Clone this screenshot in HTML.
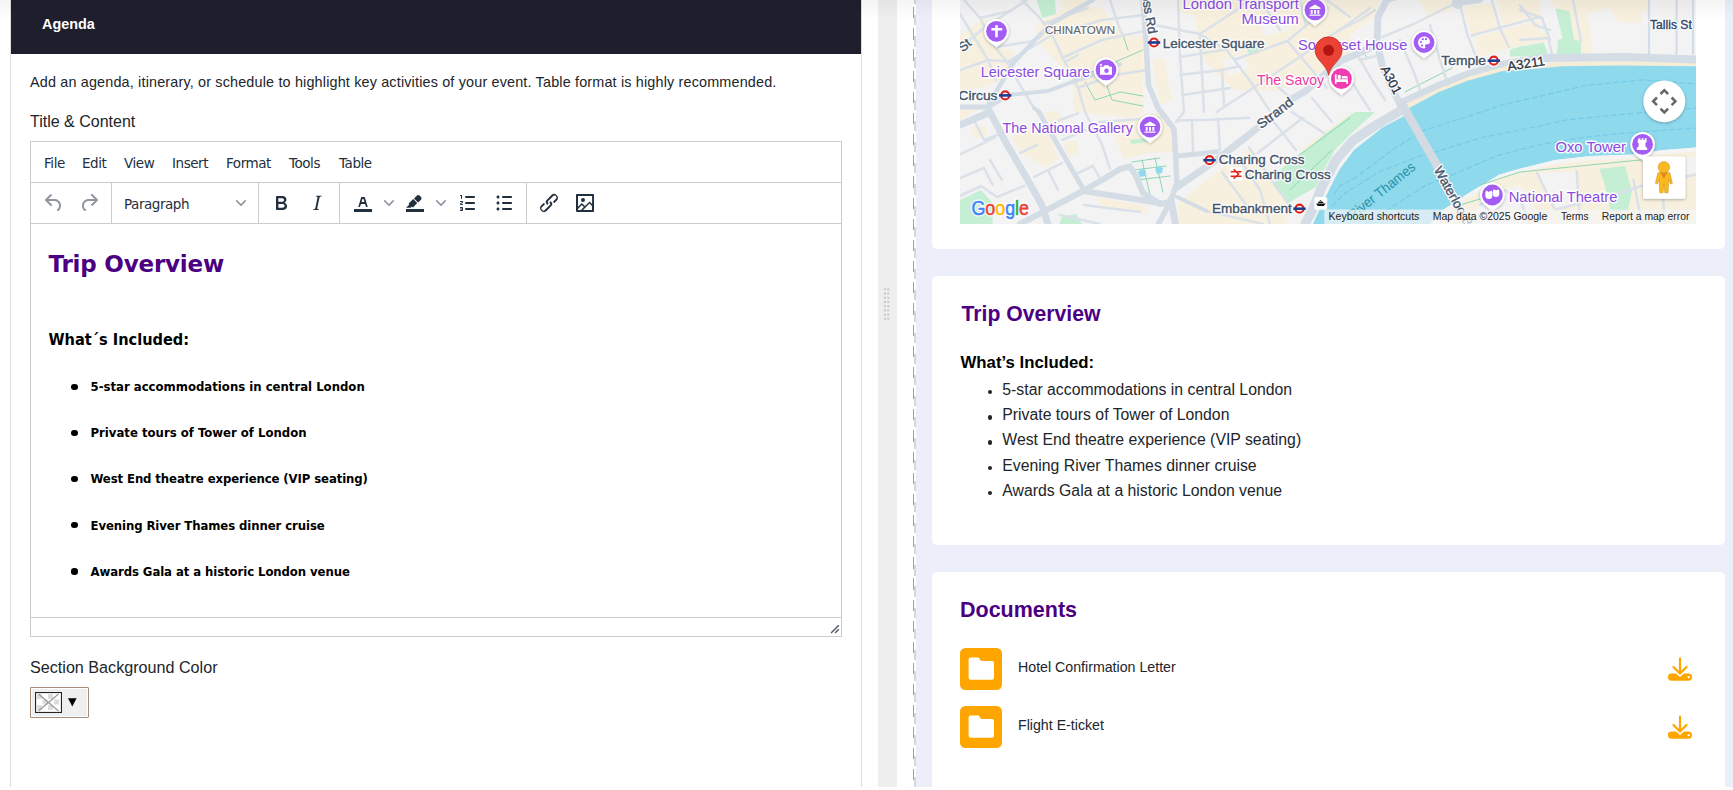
<!DOCTYPE html>
<html lang="en">
<head>
<meta charset="utf-8">
<title>Agenda</title>
<style>
*{box-sizing:border-box;margin:0;padding:0}
html,body{width:1733px;height:790px;overflow:hidden;background:#fff}
body{font-family:"Liberation Sans",Arial,sans-serif;color:#212529;position:relative}
.abs{position:absolute}
.t{position:absolute;white-space:nowrap;line-height:1}
/* left panel */
#lp{left:10px;top:-1px;width:852px;height:800px;border:1px solid #dcdcdc;background:#fff}
#hdr{left:11px;top:0;width:850px;height:54px;background:#1f1e2d}
#hdr .t{left:31px;top:17px;font-size:14.4px;font-weight:700;color:#fff}
#ed{left:30px;top:141px;width:812px;height:496px;border:1px solid #ccc;background:#fff}
.hl{position:absolute;left:0;right:0;height:1px;background:#ccc}
.vl{position:absolute;width:1px;background:#ccc;top:41px;height:40px}
.menu{font-family:"DejaVu Sans","Liberation Sans",sans-serif;font-size:13.5px;color:#222f3e;letter-spacing:-.45px;top:15px}
.seg{font-family:"DejaVu Sans","Liberation Sans",sans-serif;font-stretch:condensed;font-weight:700;color:#000}
/* splitter */
#sp{left:878px;top:0;width:19px;height:790px;background:#eee}
#dash1{left:913px;top:-13.7px;width:1px;height:810px;background:repeating-linear-gradient(to bottom,#a0a0a0 0 11.2px,transparent 11.2px 21.16px)}
#dash2{left:914px;top:-6.2px;width:2px;height:810px;background:repeating-linear-gradient(to bottom,#d6d6d6 0 10.2px,transparent 10.2px 21.16px)}
#rp{left:916px;top:0;width:817px;height:790px;background:#eceff9}
.card{position:absolute;left:932px;width:793px;background:#fff;border-radius:5px}
.h2{font-size:21.2px;font-weight:700;color:#4b0082}
.li{font-size:15.8px;color:#212529}
#topshade{left:0;top:0;width:1733px;height:20px;background:linear-gradient(to bottom,rgba(0,0,0,.045),rgba(0,0,0,0));pointer-events:none}
.ic{position:absolute;fill:#222f3e}
.ic.dis{opacity:.5}
.bul{position:absolute;border-radius:50%;background:#000}
</style>
</head>
<body>
<div id="lp" class="abs"></div>
<div id="hdr" class="abs"><div class="t">Agenda</div></div>
<div class="t" style="left:30px;top:75px;font-size:14.4px;letter-spacing:.165px;color:#212529">Add an agenda, itinerary, or schedule to highlight key activities of your event. Table format is highly recommended.</div>
<div class="t" style="left:30px;top:114px;font-size:16px;color:#212529">Title &amp; Content</div>

<div id="ed" class="abs">
  <div class="hl" style="top:40px"></div>
  <div class="hl" style="top:81px"></div>
  <div class="hl" style="top:475px"></div>
  <div class="vl" style="left:80px"></div>
  <div class="vl" style="left:227px"></div>
  <div class="vl" style="left:308px"></div>
  <div class="vl" style="left:495px"></div>
  <div class="t menu" style="left:13px">File</div>
  <div class="t menu" style="left:51px">Edit</div>
  <div class="t menu" style="left:93px">View</div>
  <div class="t menu" style="left:141px">Insert</div>
  <div class="t menu" style="left:195px">Format</div>
  <div class="t menu" style="left:258px">Tools</div>
  <div class="t menu" style="left:308px">Table</div>
  <div class="t menu" style="left:93px;top:56px">Paragraph</div>
  
  <svg class="ic dis" style="left:10.5px;top:49px" width="24" height="24" viewBox="0 0 24 24"><path d="M6.4 8H12c3.7 0 6.2 2 6.8 5.100.6 2.700-.4 5.600-2.300 6.800a1 1 0 0 1-1-1.800c1.100-.6 1.800-2.700 1.400-4.600-.5-2.100-2.100-3.500-4.900-3.500H6.400l3.300 3.300a1 1 0 1 1-1.400 1.400l-5-5a1 1 0 0 1 0-1.400l5-5a1 1 0 0 1 1.400 1.400L6.400 8z"/></svg>
  <svg class="ic dis" style="left:46px;top:49px" width="24" height="24" viewBox="0 0 24 24"><path d="M17.600 10H12c-2.800 0-4.400 1.400-4.900 3.500-.4 2 .3 4 1.400 4.600a1 1 0 1 1-1 1.800c-2-1.200-2.900-4.100-2.300-6.800.6-3 3-5.100 6.800-5.100h5.600l-3.300-3.300a1 1 0 1 1 1.400-1.400l5 5a1 1 0 0 1 0 1.400l-5 5a1 1 0 0 1-1.400-1.400l3.300-3.300z"/></svg>
  <svg class="ic" style="left:204.5px;top:56px;opacity:.5" width="10" height="10" viewBox="0 0 10 10"><path d="M8.700 2.200c.3-.3.800-.3 1 0 .4.400.4.900 0 1.200L5.700 7.800c-.3.300-.9.300-1.200 0L.2 3.400a.8.800 0 0 1 0-1.200c.3-.3.800-.3 1.100 0L5 6l3.700-3.800z"/></svg>
  <svg class="ic" style="left:238px;top:49px" width="24" height="24" viewBox="0 0 24 24"><path fill-rule="evenodd" d="M7.800 19c-.3 0-.5 0-.6-.2l-.2-.5V5.700c0-.2 0-.4.200-.5l.6-.2h5c1.500 0 2.700.3 3.500 1 .7.600 1.100 1.400 1.100 2.500a3 3 0 0 1-.6 1.900c-.4.600-1 1-1.600 1.200.4.100.9.300 1.300.6s.8.700 1 1.200c.4.400.5 1 .5 1.600 0 1.300-.4 2.300-1.300 3-.8.700-2.100 1-3.800 1H7.800zm5-8.300c.6 0 1.200-.1 1.600-.5.400-.3.600-.7.600-1.300 0-1.100-.8-1.700-2.300-1.700H9.300v3.500h3.400zm.5 6c.7 0 1.300-.1 1.700-.4.400-.4.600-.9.600-1.500s-.2-1-.7-1.400c-.4-.3-1-.4-2-.4H9.400v3.800h4z"/></svg>
  <svg class="ic" style="left:274px;top:49px" width="24" height="24" viewBox="0 0 24 24"><path fill-rule="evenodd" d="M16.700 4.700l-.1.900h-.3c-.6 0-1 0-1.400.3-.3.300-.4.600-.5 1.100l-2.100 9.800v.6c0 .5.400.8 1.400.8h.2l-.2.800H8l.2-.8h.2c1.100 0 1.800-.5 2-1.500l2-9.800.1-.5c0-.6-.4-.8-1.400-.8h-.3l.2-.9h5.800z"/></svg>
  <svg class="ic" style="left:320px;top:49px" width="24" height="24" viewBox="0 0 24 24"><path d="M3 18h18v3H3z"/><path fill-rule="evenodd" d="M8.700 16h-.8a.5.5 0 0 1-.5-.6l2.700-9c.1-.3.300-.4.500-.4h2.800c.2 0 .4.100.5.400l2.700 9a.5.5 0 0 1-.5.600h-.8a.5.5 0 0 1-.4-.4l-.7-2.200c0-.3-.3-.4-.5-.4h-3.400c-.2 0-.4.100-.5.400l-.7 2.200c0 .3-.2.400-.4.400zm2.600-7.600l-.6 2a.5.5 0 0 0 .5.600h1.600a.5.5 0 0 0 .5-.6l-.6-2c0-.3-.3-.4-.5-.4h-.4c-.2 0-.4.100-.5.400z"/></svg>
  <svg class="ic" style="left:353px;top:56px;opacity:.5" width="10" height="10" viewBox="0 0 10 10"><path d="M8.700 2.200c.3-.3.800-.3 1 0 .4.400.4.900 0 1.200L5.700 7.800c-.3.300-.9.300-1.200 0L.2 3.400a.8.800 0 0 1 0-1.200c.3-.3.800-.3 1.100 0L5 6l3.700-3.800z"/></svg>
  <svg class="ic" style="left:372px;top:49px" width="24" height="24" viewBox="0 0 24 24"><path d="M3 18h18v3H3z"/><path d="M7.700 16.700H3l3.300-3.300-.7-.8L10.200 8l4 4.100-4 4.200c-.2.200-.6.200-.8 0l-.6-.7-1.100 1.100zm5-7.500L11 7.400l3-2.900a2 2 0 0 1 2.600 0L18 6c.7.700.7 2 0 2.700l-2.900 2.900-1.800-1.800-.5-.6"/></svg>
  <svg class="ic" style="left:405px;top:56px;opacity:.5" width="10" height="10" viewBox="0 0 10 10"><path d="M8.700 2.200c.3-.3.800-.3 1 0 .4.400.4.900 0 1.200L5.700 7.800c-.3.300-.9.300-1.200 0L.2 3.400a.8.800 0 0 1 0-1.200c.3-.3.800-.3 1.100 0L5 6l3.700-3.800z"/></svg>
  <svg class="ic" style="left:425px;top:49px" width="24" height="24" viewBox="0 0 24 24"><path fill-rule="evenodd" d="M10 17h8c.6 0 1 .4 1 1s-.4 1-1 1h-8a1 1 0 0 1 0-2zm0-6h8c.6 0 1 .4 1 1s-.4 1-1 1h-8a1 1 0 0 1 0-2zm0-6h8c.6 0 1 .4 1 1s-.4 1-1 1h-8a1 1 0 1 1 0-2zM6 4v3.500c0 .3-.2.500-.5.500a.5.5 0 0 1-.5-.5V5h-.5a.5.5 0 0 1 0-1H6zm-1 8.800l.2.200h1.300c.3 0 .5.200.5.500s-.2.500-.5.500H4.900a1 1 0 0 1-.9-1V13c0-.4.300-.8.600-1l1.200-.4.200-.3a.2.200 0 0 0-.2-.2H4.500a.5.500 0 0 1-.5-.5c0-.3.200-.5.500-.5h1.600c.5 0 .9.400.9 1v.1c0 .4-.3.800-.6 1l-1.200.4-.2.300zM7 17v2c0 .6-.4 1-1 1H4.500a.5.500 0 0 1 0-1h1.200c.2 0 .3-.1.300-.3 0-.2-.1-.3-.3-.3H4.400a.4.400 0 1 1 0-.8h1.300c.2 0 .3-.1.300-.3 0-.2-.1-.3-.3-.3H4.500a.5.500 0 1 1 0-1H6c.6 0 1 .4 1 1z"/></svg>
  <svg class="ic" style="left:461px;top:49px" width="24" height="24" viewBox="0 0 24 24"><path fill-rule="evenodd" d="M11 5h8c.6 0 1 .4 1 1s-.4 1-1 1h-8a1 1 0 0 1 0-2zm0 6h8c.6 0 1 .4 1 1s-.4 1-1 1h-8a1 1 0 0 1 0-2zm0 6h8c.6 0 1 .4 1 1s-.4 1-1 1h-8a1 1 0 0 1 0-2zM4.500 6c0-.8.700-1.500 1.500-1.500s1.500.7 1.500 1.500S6.800 7.500 6 7.500 4.500 6.800 4.500 6zm0 6c0-.8.700-1.500 1.500-1.500s1.500.7 1.500 1.500-.7 1.500-1.500 1.500-1.500-.7-1.500-1.500zm0 6c0-.8.700-1.500 1.500-1.500s1.500.7 1.500 1.500-.7 1.500-1.500 1.500-1.500-.7-1.500-1.500z"/></svg>
  <svg class="ic" style="left:506px;top:49px" width="24" height="24" viewBox="0 0 24 24"><path d="M6.200 12.300a1 1 0 0 1 1.400 1.400l-2.100 2a2 2 0 1 0 2.700 2.800l4.800-4.800a1 1 0 0 0 0-1.400 1 1 0 1 1 1.400-1.300 2.900 2.900 0 0 1 0 4L9.600 20a3.900 3.900 0 0 1-5.500-5.500l2-2zm11.600-.6a1 1 0 0 1-1.400-1.400l2-2a2 2 0 1 0-2.600-2.800L11 10.300a1 1 0 0 0 0 1.400A1 1 0 1 1 9.600 13a2.900 2.900 0 0 1 0-4L14.400 4a3.900 3.900 0 0 1 5.500 5.500l-2 2z"/></svg>
  <svg class="ic" style="left:542px;top:49px" width="24" height="24" viewBox="0 0 24 24"><path d="M5 15.700l3.300-3.200c.3-.3.700-.3 1 0L12 15l4.100-4c.3-.4.800-.4 1 0l2 1.900V5H5v10.700zM5 18V19h3l2.800-2.900-2-2L5 17.900zm14-3l-2.500-2.400-6.400 6.500H19v-4zM4 3h16c.6 0 1 .4 1 1v16c0 .6-.4 1-1 1H4a1 1 0 0 1-1-1V4c0-.6.4-1 1-1zm6 8a2 2 0 1 0 0-4 2 2 0 0 0 0 4z"/></svg>
  <svg class="ic" style="left:799px;top:482px;opacity:.8" width="10" height="10" viewBox="0 0 10 10"><path d="M8.100 1.100A.5.5 0 1 1 9 2l-7 7A.5.5 0 1 1 1 8l7-7zM8.100 5.100A.5.5 0 1 1 9 6l-3 3A.5.5 0 1 1 5 8l3-3z"/></svg>

<div class="bul" style="left:40.4px;top:241.8px;width:6.4px;height:6.4px"></div>
<div class="bul" style="left:40.4px;top:287.5px;width:6.4px;height:6.4px"></div>
<div class="bul" style="left:40.4px;top:333.5px;width:6.4px;height:6.4px"></div>
<div class="bul" style="left:40.4px;top:379.5px;width:6.4px;height:6.4px"></div>
<div class="bul" style="left:40.4px;top:426.3px;width:6.4px;height:6.4px"></div>
  <div class="t seg" style="left:17.5px;top:111px;font-size:23px;letter-spacing:-.2px;color:#4b0082;font-stretch:normal">Trip Overview</div>
  <div class="t seg" style="left:17.5px;top:189.5px;font-size:16.2px">What´s Included:</div>
  <div class="t seg" style="left:59.5px;top:238px;font-size:13px">5-star accommodations in central London</div>
  <div class="t seg" style="left:59.5px;top:284px;font-size:13px">Private tours of Tower of London</div>
  <div class="t seg" style="left:59.5px;top:330px;font-size:13px;letter-spacing:-.1px">West End theatre experience (VIP seating)</div>
  <div class="t seg" style="left:59.5px;top:376.6px;font-size:13px;letter-spacing:-.09px">Evening River Thames dinner cruise</div>
  <div class="t seg" style="left:59.5px;top:423px;font-size:13px;letter-spacing:-.08px">Awards Gala at a historic London venue</div>
</div>

<div class="t" style="left:30px;top:659.4px;font-size:16.15px;color:#212529">Section Background Color</div>
<div class="abs" id="cbtn" style="left:30px;top:687px;width:59px;height:31px;border:1px solid #a58b78;background:#efefef;border-radius:1px;box-shadow:inset 0 0 0 1px #fff"></div>
<svg class="abs" style="left:35px;top:692px" width="27" height="21" viewBox="0 0 27 21"><rect x=".5" y=".5" width="26" height="20" fill="#fff" stroke="#222" stroke-width="1.200"/><g fill="#dcdcdc"><rect x="2" y="2" width="5" height="5"/><rect x="13" y="2" width="5" height="5"/><rect x="7.500" y="7.500" width="5" height="5"/><rect x="19" y="7.500" width="5" height="5"/><rect x="2" y="13" width="5" height="5"/><rect x="13" y="13" width="5" height="5"/></g><path d="M3.500 2 L23.500 19 M23.500 2 L3.500 19" stroke="#9a9a9a" stroke-width="1.300"/></svg>
<svg class="abs" style="left:67.500px;top:697.500px" width="9" height="9" viewBox="0 0 9 9"><path d="M0 .3 h8.600 l-4.300 8.200z" fill="#000"/></svg>

<div id="sp" class="abs"></div>
<svg class="abs" style="left:884px;top:288px" width="6" height="33" viewBox="0 0 6 33"><rect x="0" y="0.3" width="2" height="2" fill="#c9c9c9"/><rect x="3.300" y="0.3" width="2" height="2" fill="#c9c9c9"/><rect x="0" y="4.52" width="2" height="2" fill="#c9c9c9"/><rect x="3.300" y="4.52" width="2" height="2" fill="#c9c9c9"/><rect x="0" y="8.74" width="2" height="2" fill="#c9c9c9"/><rect x="3.300" y="8.74" width="2" height="2" fill="#c9c9c9"/><rect x="0" y="12.96" width="2" height="2" fill="#c9c9c9"/><rect x="3.300" y="12.96" width="2" height="2" fill="#c9c9c9"/><rect x="0" y="17.18" width="2" height="2" fill="#c9c9c9"/><rect x="3.300" y="17.18" width="2" height="2" fill="#c9c9c9"/><rect x="0" y="21.4" width="2" height="2" fill="#c9c9c9"/><rect x="3.300" y="21.4" width="2" height="2" fill="#c9c9c9"/><rect x="0" y="25.62" width="2" height="2" fill="#c9c9c9"/><rect x="3.300" y="25.62" width="2" height="2" fill="#c9c9c9"/><rect x="0" y="29.84" width="2" height="2" fill="#c9c9c9"/><rect x="3.300" y="29.84" width="2" height="2" fill="#c9c9c9"/></svg>
<div id="dash1" class="abs"></div>
<div id="dash2" class="abs"></div>
<div id="rp" class="abs"></div>

<div class="card" style="top:-10px;height:259px"></div>
<div class="card" style="top:276px;height:269px"></div>
<div class="card" style="top:572px;height:240px"></div>
<!--MAPSTART--><svg id="map" class="abs" style="left:960px;top:0" width="736" height="224" viewBox="0 0 736 224" font-family="'Liberation Sans',Arial,sans-serif">
<defs>
<clipPath id="mc"><rect x="0" y="0" width="736" height="224"/></clipPath>
<filter id="sh" x="-30%" y="-30%" width="160%" height="160%"><feDropShadow dx="0" dy="1" stdDeviation="1.5" flood-color="#000" flood-opacity=".3"/></filter>

</defs>
<g clip-path="url(#mc)">
<rect width="736" height="224" fill="#f3f3f4"/>
<path d="M76 24 L113 4 L142 8 L163 35 L183 37 L183 112 L170 118 L113 112 L113 80 L79 42 Z" fill="#f8f0de"/>
<path d="M0 35 L25 17 L33 47 L54 50 L42 80 L21 88 L0 91 Z" fill="#f8f0de"/>
<path d="M100 0 L135 0 L118 10 L104 14 Z" fill="#f8f0de"/>
<path d="M50 137.5 L85 126 L99 159 L85 167 L61 153 Z" fill="#f8f0de"/>
<path d="M103 143 L116 140 L119 152 L108 156 Z" fill="#f8f0de"/>
<path d="M11 127.6 L25.5 126 L27 136 L14 139 Z" fill="#f8f0de"/>
<path d="M0 108 L10 104 L14 112 L0 120 Z" fill="#f8f0de"/>
<path d="M156 120.5 L201 112 L212.7 130.4 L212.7 151.7 L190 153 L164 159 L156 140 Z" fill="#f8f0de"/>
<path d="M136 197 L187 205.5 L186 214 L142 208 Z" fill="#f8f0de"/>
<path d="M85 113 L97 110 L103 122 L91 126 Z" fill="#f8f0de"/>
<path d="M218 0 L420 0 L414 16 L390 35.4 L390 59.5 L357 73.7 L317.6 90.7 L275 90.7 L251 68 L238 54 L236 16 L218 12 Z" fill="#f8f0de"/>
<path d="M192 60 L204 58 L212 100 L200 105 Z" fill="#f8f0de"/>
<path d="M258 171.5 L292 147.4 L313 180 L331.7 202.7 L326 224 L218 224 L218 202.7 Z" fill="#f8f0de"/>
<path d="M340 150 L392 112 L398 118 L346 156 Z" fill="#f8f0de"/>
<path d="M459 0 L490.6 0 L492 11.3 L468 15.6 Z" fill="#f8f0de"/>
<path d="M502 5.7 L533 4 L540 28 L511.8 35.4 Z" fill="#f8f0de"/>
<path d="M536 0 L580 0 L580 15.6 L543 25.5 Z" fill="#f8f0de"/>
<path d="M514.7 36.9 L580 19.8 L580 42.5 L548.7 48.2 L519 56.7 Z" fill="#f8f0de"/>
<path d="M380 0 L415.4 0 L412.6 18.4 L394 31 L380 21 Z" fill="#f8f0de"/>
<path d="M580 0 L687.6 0 L687.6 11 L682 11 L682 22.7 L659 22.7 L649 7 L628 14 L631 35 L632 54 L621 54 L621 41 L614 39.7 L609.6 11.3 L595.4 8.5 L590 0 Z" fill="#f8f0de"/>
<path d="M560 34 L588.4 32 L585.5 41 L560 45.4 Z" fill="#f8f0de"/>
<path d="M736 150 L701.7 153 L673.4 157.5 L631 159 L595.4 163 L560 172 L540 178 L510 196 L485 214 L478 224 L736 224 Z" fill="#f8f0de"/>
<path d="M577 173 L616.7 171.5 L616.7 202.7 L595 209.8 Z" fill="#f3f3f4"/>
<path d="M690 160 L736 156 L736 172 L690 180 Z" fill="#f3f3f4"/>
<path d="M520 200 L560 185 L575 210 L560 224 L510 224 Z" fill="#f3f3f4"/>
<path d="M170 160 L200 158 L212 190 L185 196 L176 176 Z" fill="#f3f3f4"/>
<path d="M298 20 L325 16 L330 30 L305 36 Z" fill="#f3f3f4"/>
<path d="M262 60 L282 54 L290 68 L270 76 Z" fill="#f3f3f4"/>
<path d="M448.5 105.7 L478 90 L506.6 78.8 L542 68.9 L560 68 L602.5 64.3 L659 63.5 L736 64.3" fill="none" stroke="#f6edd8" stroke-width="5" stroke-linecap="round" stroke-linejoin="round" />
<path d="M395 112 L364 134.7 L349 148 L337.4 155.3 L321.5 168.6 L313 185.4 L328.6 203 L342 195 L356 187 L366.5 165 L375 150 L390 134.7 L415 112 Z" fill="#c4efd5"/>
<path d="M0 200 L21 190 L32.6 202.7 L32.6 224 L0 224 Z" fill="#c4efd5"/>
<path d="M99 224 L102 217 L116 214 L122 224 Z" fill="#c4efd5"/>
<path d="M77 0 L95 0 L96 14 L82 18 Z" fill="#c4efd5"/>
<path d="M639.4 168.7 L665 165.9 L672 191.4 L667.7 211 L650.7 211 L645 185.7 Z" fill="#c4efd5"/>
<path d="M595.4 8.5 L609.6 11.3 L614 39.7 L621 41 L621 54 L597 54 L598 39.7 L602.5 38.3 Z" fill="#c4efd5"/>
<path d="M560 46.8 L584 42.5 L588 54 L560 56.7 Z" fill="#c4efd5"/>
<path d="M550 49.6 L562 46 L562 56 L550 56.7 Z" fill="#c4efd5"/>
<path d="M287 48 L297 46 L299 53 L289 55 Z" fill="#c4efd5"/>
<path d="M170 140 L186 138 L187 142 L171 144 Z" fill="#c4efd5"/>
<path d="M353 224 L364 200 L374 180 L380 168.7 L394 150 L422.5 127.6 L446.6 114.8 L449.5 107.7 L479 92 L507.6 80.8 L543 70.9 L560 70 L602.5 66.3 L659 65.5 L736 66.3 L736 147.4 L701.7 150.3 L673.4 154.5 L631 156 L595.4 160 L560 168.7 L540 174.4 L507.6 194 L482 211 L470 224 Z" fill="#8fd9ed"/>
<path d="M736 149.4 L701.7 152.3 L673.4 156.5 L631 158 L595.4 162 L560 170.7 L540 176.4 L507.6 196 L482 213 L472 226" fill="none" stroke="#f4f4f4" stroke-width="4" stroke-linecap="round" stroke-linejoin="round" />
<path d="M374 194 L380 185.7 L394 178.6 L433.9 148.9 L463.6 130.4 L521.7 112 L540 105.4 L600 91.5 L625.5 85.5 L682.5 79.8 L736 84" fill="none" stroke="#74cbe7" stroke-width="1.2" stroke-linecap="round" stroke-linejoin="round" stroke-dasharray="5 3.300"/>
<path d="M372 206 L385.7 192.8 L419.7 171.5 L459.4 156 L476.4 151.7 L521.7 137.5 L580 126 L606 120 L640 116.5 L682.5 112.5 L736 108" fill="none" stroke="#74cbe7" stroke-width="1.2" stroke-linecap="round" stroke-linejoin="round" stroke-dasharray="5 3.300"/>
<path d="M405 224 L429.6 208.4 L465 185.7 L493.4 174.4 L536 156 L580 144.6 L620 138 L654 134 L736 128" fill="none" stroke="#74cbe7" stroke-width="1.2" stroke-linecap="round" stroke-linejoin="round" stroke-dasharray="5 3.300"/>
<path d="M113 80 L183 50" fill="none" stroke="#8fd6b1" stroke-width="1" stroke-linecap="round" stroke-linejoin="round" />
<path d="M140 66 L152 100 L183 106" fill="none" stroke="#8fd6b1" stroke-width="1" stroke-linecap="round" stroke-linejoin="round" />
<path d="M125 82 L135 100 L160 92 L183 96" fill="none" stroke="#8fd6b1" stroke-width="1" stroke-linecap="round" stroke-linejoin="round" />
<path d="M163 35 L168 50" fill="none" stroke="#8fd6b1" stroke-width="1" stroke-linecap="round" stroke-linejoin="round" />
<path d="M150 80 L157 62" fill="none" stroke="#8fd6b1" stroke-width="1" stroke-linecap="round" stroke-linejoin="round" />
<path d="M172 162 L200 158" fill="none" stroke="#8fd6b1" stroke-width="1" stroke-linecap="round" stroke-linejoin="round" />
<path d="M174 170 L206 166" fill="none" stroke="#8fd6b1" stroke-width="1" stroke-linecap="round" stroke-linejoin="round" />
<path d="M177 180 L210 176" fill="none" stroke="#8fd6b1" stroke-width="1" stroke-linecap="round" stroke-linejoin="round" />
<path d="M182 160 L190 195" fill="none" stroke="#8fd6b1" stroke-width="1" stroke-linecap="round" stroke-linejoin="round" />
<path d="M195 158 L203 192" fill="none" stroke="#8fd6b1" stroke-width="1" stroke-linecap="round" stroke-linejoin="round" />
<path d="M340 154.5 L390 118" fill="none" stroke="#8fd6b1" stroke-width="1" stroke-linecap="round" stroke-linejoin="round" />
<path d="M330 190 L372 150" fill="none" stroke="#8fd6b1" stroke-width="1" stroke-linecap="round" stroke-linejoin="round" />
<path d="M520 185 L560 172 L620 166 L700 158" fill="none" stroke="#8fd6b1" stroke-width="1" stroke-linecap="round" stroke-linejoin="round" />
<path d="M500 205 L530 196" fill="none" stroke="#8fd6b1" stroke-width="1" stroke-linecap="round" stroke-linejoin="round" />
<path d="M400 50 L408 58" fill="none" stroke="#8fd6b1" stroke-width="1" stroke-linecap="round" stroke-linejoin="round" />
<path d="M445 92 L492 68" fill="none" stroke="#8fd6b1" stroke-width="1" stroke-linecap="round" stroke-linejoin="round" />
<path d="M178 172 l4 -3 l4 2 l-1 5 l-5 1z" fill="#8fd9ed"/>
<path d="M195 169 l4 -3 l4 2 l-1 5 l-5 1z" fill="#8fd9ed"/>
<path d="M4 0 L20 18 L35 47 L47 62 L60 85 L74 108" fill="none" stroke="#dae1e8" stroke-width="2.5" stroke-linecap="round" stroke-linejoin="round" />
<path d="M62 0 L79 17 L92 35 L105 62 L118 88 L125 112" fill="none" stroke="#dae1e8" stroke-width="2.5" stroke-linecap="round" stroke-linejoin="round" />
<path d="M102 58 L142 40 L184 31" fill="none" stroke="#dae1e8" stroke-width="2.5" stroke-linecap="round" stroke-linejoin="round" />
<path d="M85 23 L128 8" fill="none" stroke="#dae1e8" stroke-width="2.5" stroke-linecap="round" stroke-linejoin="round" />
<path d="M0 14 L14 37 L28 60 L36 80" fill="none" stroke="#dae1e8" stroke-width="2.5" stroke-linecap="round" stroke-linejoin="round" />
<path d="M0 48 L24 28 L50 11 L67 0" fill="none" stroke="#dae1e8" stroke-width="2.5" stroke-linecap="round" stroke-linejoin="round" />
<path d="M20 18 L50 11" fill="none" stroke="#dae1e8" stroke-width="2.5" stroke-linecap="round" stroke-linejoin="round" />
<path d="M35 47 L74 41" fill="none" stroke="#dae1e8" stroke-width="2.5" stroke-linecap="round" stroke-linejoin="round" />
<path d="M47 62 L92 35" fill="none" stroke="#dae1e8" stroke-width="2.5" stroke-linecap="round" stroke-linejoin="round" />
<path d="M0 70 L28 60 L54 62" fill="none" stroke="#dae1e8" stroke-width="2.5" stroke-linecap="round" stroke-linejoin="round" />
<path d="M92 35 L142 20 L184 15" fill="none" stroke="#dae1e8" stroke-width="2.5" stroke-linecap="round" stroke-linejoin="round" />
<path d="M118 88 L150 76 L186 70" fill="none" stroke="#dae1e8" stroke-width="2.5" stroke-linecap="round" stroke-linejoin="round" />
<path d="M105 62 L118 55" fill="none" stroke="#dae1e8" stroke-width="2.5" stroke-linecap="round" stroke-linejoin="round" />
<path d="M150 0 L160 30 L163 35" fill="none" stroke="#dae1e8" stroke-width="2.5" stroke-linecap="round" stroke-linejoin="round" />
<path d="M0 154.5 L35 137.5" fill="none" stroke="#dae1e8" stroke-width="2.5" stroke-linecap="round" stroke-linejoin="round" />
<path d="M0 178 L24 168 L32.6 185" fill="none" stroke="#dae1e8" stroke-width="2.5" stroke-linecap="round" stroke-linejoin="round" />
<path d="M0 196 L21 186 L37 197" fill="none" stroke="#dae1e8" stroke-width="2.5" stroke-linecap="round" stroke-linejoin="round" />
<path d="M37 197 L64 186" fill="none" stroke="#dae1e8" stroke-width="2.5" stroke-linecap="round" stroke-linejoin="round" />
<path d="M60 153 L77 145" fill="none" stroke="#dae1e8" stroke-width="2.5" stroke-linecap="round" stroke-linejoin="round" />
<path d="M74 177 L102 163" fill="none" stroke="#dae1e8" stroke-width="2.5" stroke-linecap="round" stroke-linejoin="round" />
<path d="M118 173 L133 166 L139 177" fill="none" stroke="#dae1e8" stroke-width="2.5" stroke-linecap="round" stroke-linejoin="round" />
<path d="M99 120.5 L118 113.4" fill="none" stroke="#dae1e8" stroke-width="2.5" stroke-linecap="round" stroke-linejoin="round" />
<path d="M139 122 L200 117.7" fill="none" stroke="#dae1e8" stroke-width="2.5" stroke-linecap="round" stroke-linejoin="round" />
<path d="M125 112 L142 144.6 L150 168.7" fill="none" stroke="#dae1e8" stroke-width="2.5" stroke-linecap="round" stroke-linejoin="round" />
<path d="M102 140 L125 130" fill="none" stroke="#dae1e8" stroke-width="2.5" stroke-linecap="round" stroke-linejoin="round" />
<path d="M14 120 L24 140 L40 134" fill="none" stroke="#dae1e8" stroke-width="2.5" stroke-linecap="round" stroke-linejoin="round" />
<path d="M30 160 L42 180" fill="none" stroke="#dae1e8" stroke-width="2.5" stroke-linecap="round" stroke-linejoin="round" />
<path d="M88 170 L98 190" fill="none" stroke="#dae1e8" stroke-width="2.5" stroke-linecap="round" stroke-linejoin="round" />
<path d="M124 205 L180 212" fill="none" stroke="#dae1e8" stroke-width="2.5" stroke-linecap="round" stroke-linejoin="round" />
<path d="M100 215 L140 224" fill="none" stroke="#dae1e8" stroke-width="2.5" stroke-linecap="round" stroke-linejoin="round" />
<path d="M218 0 L220 57 L224 112 L216 122" fill="none" stroke="#dae1e8" stroke-width="2.5" stroke-linecap="round" stroke-linejoin="round" />
<path d="M256.6 112 L289 90.7 L331.7 62.4 L390 22.7 L410 8" fill="none" stroke="#dae1e8" stroke-width="2.5" stroke-linecap="round" stroke-linejoin="round" />
<path d="M275 59.5 L327.5 41 L346 25.5 L368 8" fill="none" stroke="#dae1e8" stroke-width="2.5" stroke-linecap="round" stroke-linejoin="round" />
<path d="M266.5 49.6 L289 79.4 L310.5 112" fill="none" stroke="#dae1e8" stroke-width="2.5" stroke-linecap="round" stroke-linejoin="round" />
<path d="M327.5 41 L343 59.5 L367 88" fill="none" stroke="#dae1e8" stroke-width="2.5" stroke-linecap="round" stroke-linejoin="round" />
<path d="M190 24 L239.6 34 L275 11.3 L290 0" fill="none" stroke="#dae1e8" stroke-width="2.5" stroke-linecap="round" stroke-linejoin="round" />
<path d="M367 0 L390 17" fill="none" stroke="#dae1e8" stroke-width="2.5" stroke-linecap="round" stroke-linejoin="round" />
<path d="M239.6 34 L266.5 49.6" fill="none" stroke="#dae1e8" stroke-width="2.5" stroke-linecap="round" stroke-linejoin="round" />
<path d="M220 57 L250 52 L266.5 49.6" fill="none" stroke="#dae1e8" stroke-width="2.5" stroke-linecap="round" stroke-linejoin="round" />
<path d="M220 75 L262 70 L280 66" fill="none" stroke="#dae1e8" stroke-width="2.5" stroke-linecap="round" stroke-linejoin="round" />
<path d="M222 95 L270 88" fill="none" stroke="#dae1e8" stroke-width="2.5" stroke-linecap="round" stroke-linejoin="round" />
<path d="M240 34 L244 112" fill="none" stroke="#dae1e8" stroke-width="2.5" stroke-linecap="round" stroke-linejoin="round" />
<path d="M262 70 L264 105" fill="none" stroke="#dae1e8" stroke-width="2.5" stroke-linecap="round" stroke-linejoin="round" />
<path d="M300 0 L320 30" fill="none" stroke="#dae1e8" stroke-width="2.5" stroke-linecap="round" stroke-linejoin="round" />
<path d="M340 0 L346 25.5" fill="none" stroke="#dae1e8" stroke-width="2.5" stroke-linecap="round" stroke-linejoin="round" />
<path d="M305 75 L331.7 99" fill="none" stroke="#dae1e8" stroke-width="2.5" stroke-linecap="round" stroke-linejoin="round" />
<path d="M217 120.5 L249.5 119.8 L289 117.7" fill="none" stroke="#dae1e8" stroke-width="2.5" stroke-linecap="round" stroke-linejoin="round" />
<path d="M232 120 L233 152" fill="none" stroke="#dae1e8" stroke-width="2.5" stroke-linecap="round" stroke-linejoin="round" />
<path d="M258 119 L260 150" fill="none" stroke="#dae1e8" stroke-width="2.5" stroke-linecap="round" stroke-linejoin="round" />
<path d="M289 147.4 L327.5 202.7" fill="none" stroke="#dae1e8" stroke-width="2.5" stroke-linecap="round" stroke-linejoin="round" />
<path d="M310.5 117.7 L336 150" fill="none" stroke="#dae1e8" stroke-width="2.5" stroke-linecap="round" stroke-linejoin="round" />
<path d="M331.7 112 L364 133" fill="none" stroke="#dae1e8" stroke-width="2.5" stroke-linecap="round" stroke-linejoin="round" />
<path d="M297.7 153 L343 117.7" fill="none" stroke="#dae1e8" stroke-width="2.5" stroke-linecap="round" stroke-linejoin="round" />
<path d="M280 160 L300 190 L310 224" fill="none" stroke="#dae1e8" stroke-width="2.5" stroke-linecap="round" stroke-linejoin="round" />
<path d="M262 172 L290 210" fill="none" stroke="#dae1e8" stroke-width="2.5" stroke-linecap="round" stroke-linejoin="round" />
<path d="M246.7 211 L303 224" fill="none" stroke="#dae1e8" stroke-width="2.5" stroke-linecap="round" stroke-linejoin="round" />
<path d="M352 98 L372 122" fill="none" stroke="#dae1e8" stroke-width="2.5" stroke-linecap="round" stroke-linejoin="round" />
<path d="M422.5 37 L453.7 24 L490.6 5.7 L500 0" fill="none" stroke="#dae1e8" stroke-width="2.5" stroke-linecap="round" stroke-linejoin="round" />
<path d="M500.5 7 L507.6 35.4 L516 56.7 L521.7 70.9" fill="none" stroke="#dae1e8" stroke-width="2.5" stroke-linecap="round" stroke-linejoin="round" />
<path d="M531.7 0 L540 28 L548.7 46.8" fill="none" stroke="#dae1e8" stroke-width="2.5" stroke-linecap="round" stroke-linejoin="round" />
<path d="M511.8 35.4 L580 17" fill="none" stroke="#dae1e8" stroke-width="2.5" stroke-linecap="round" stroke-linejoin="round" />
<path d="M380 30 L400 20 L415 10" fill="none" stroke="#dae1e8" stroke-width="2.5" stroke-linecap="round" stroke-linejoin="round" />
<path d="M385 70 L400 95 L410 110" fill="none" stroke="#dae1e8" stroke-width="2.5" stroke-linecap="round" stroke-linejoin="round" />
<path d="M397 54 L412 80 L425 100" fill="none" stroke="#dae1e8" stroke-width="2.5" stroke-linecap="round" stroke-linejoin="round" />
<path d="M400 60 L416 56" fill="none" stroke="#dae1e8" stroke-width="2.5" stroke-linecap="round" stroke-linejoin="round" />
<path d="M440 40 L455 75 L462 96" fill="none" stroke="#dae1e8" stroke-width="2.5" stroke-linecap="round" stroke-linejoin="round" />
<path d="M470 25 L480 60 L488 85" fill="none" stroke="#dae1e8" stroke-width="2.5" stroke-linecap="round" stroke-linejoin="round" />
<path d="M560 5 L575 25 L590 30" fill="none" stroke="#dae1e8" stroke-width="2.5" stroke-linecap="round" stroke-linejoin="round" />
<path d="M560 10 L582 18 L590 40" fill="none" stroke="#dae1e8" stroke-width="2.5" stroke-linecap="round" stroke-linejoin="round" />
<path d="M560 40 L588 38 L592 54" fill="none" stroke="#dae1e8" stroke-width="2.5" stroke-linecap="round" stroke-linejoin="round" />
<path d="M613 0 L621 41" fill="none" stroke="#dae1e8" stroke-width="2.5" stroke-linecap="round" stroke-linejoin="round" />
<path d="M656.4 194 L682 185.7 L736 174.4" fill="none" stroke="#dae1e8" stroke-width="2.5" stroke-linecap="round" stroke-linejoin="round" />
<path d="M673.4 180 L682 224" fill="none" stroke="#dae1e8" stroke-width="2.5" stroke-linecap="round" stroke-linejoin="round" />
<path d="M577 173 L595 209.8" fill="none" stroke="#dae1e8" stroke-width="2.5" stroke-linecap="round" stroke-linejoin="round" />
<path d="M595 209.8 L656.4 194" fill="none" stroke="#dae1e8" stroke-width="2.5" stroke-linecap="round" stroke-linejoin="round" />
<path d="M520 205 L545 190 L560 200 L570 224" fill="none" stroke="#dae1e8" stroke-width="2.5" stroke-linecap="round" stroke-linejoin="round" />
<path d="M700 160 L705 224" fill="none" stroke="#dae1e8" stroke-width="2.5" stroke-linecap="round" stroke-linejoin="round" />
<path d="M616.7 171.5 L620 224" fill="none" stroke="#dae1e8" stroke-width="2.5" stroke-linecap="round" stroke-linejoin="round" />
<path d="M689 0 L689 54" fill="none" stroke="#d4dce5" stroke-width="2.2" stroke-linecap="round" stroke-linejoin="round" />
<path d="M716.6 0 L716.6 54" fill="none" stroke="#d4dce5" stroke-width="2.2" stroke-linecap="round" stroke-linejoin="round" />
<path d="M733 0 L733 54" fill="none" stroke="#d4dce5" stroke-width="2.2" stroke-linecap="round" stroke-linejoin="round" />
<path d="M133 0 L113 11 L91 24 L74 41 L54 62 L40 85 L28 105" fill="none" stroke="#d4dce5" stroke-width="4.5" stroke-linecap="round" stroke-linejoin="round" />
<path d="M48 95 L88 91 L112 82 L136 74 L160 64" fill="none" stroke="#d4dce5" stroke-width="4" stroke-linecap="round" stroke-linejoin="round" />
<path d="M0 125 L28 113" fill="none" stroke="#d4dce5" stroke-width="7" stroke-linecap="round" stroke-linejoin="round" />
<path d="M0 107 L28 107 L48 95" fill="none" stroke="#d4dce5" stroke-width="5" stroke-linecap="round" stroke-linejoin="round" />
<path d="M28 108 L47 144.6 L67 178.6 L82 205.5 L88 224" fill="none" stroke="#d4dce5" stroke-width="7" stroke-linecap="round" stroke-linejoin="round" />
<path d="M79 112 L99 147 L118 180 L123 188.5" fill="none" stroke="#d4dce5" stroke-width="5" stroke-linecap="round" stroke-linejoin="round" />
<path d="M74 108 L79 112" fill="none" stroke="#d4dce5" stroke-width="4" stroke-linecap="round" stroke-linejoin="round" />
<path d="M60 224 L85 211 L123 191 L142 180 L160 169 L170 166.5 L176 176 L183 193 L200 204 L211 202" fill="none" stroke="#d4dce5" stroke-width="6" stroke-linecap="round" stroke-linejoin="round" />
<path d="M123 191 L200 203" fill="none" stroke="#d4dce5" stroke-width="6" stroke-linecap="round" stroke-linejoin="round" />
<path d="M183 0 L186 42 L188.5 85 L198 108 L201 112 L214 129 L215.5 154.5 L217 183 L211 200 L198.5 224" fill="none" stroke="#d4dce5" stroke-width="5.5" stroke-linecap="round" stroke-linejoin="round" />
<path d="M211 200 L215.5 224" fill="none" stroke="#d4dce5" stroke-width="7" stroke-linecap="round" stroke-linejoin="round" />
<path d="M217 197 L246.7 211" fill="none" stroke="#d4dce5" stroke-width="4" stroke-linecap="round" stroke-linejoin="round" />
<path d="M217 156 L246.7 153 L256.6 151.7" fill="none" stroke="#d4dce5" stroke-width="5" stroke-linecap="round" stroke-linejoin="round" />
<path d="M217 187 L254 161.6 L289 134.7 L310.5 117.7 L331.7 99 L346 90.7 L380 61 L397 54 L417 45" fill="none" stroke="#d4dce5" stroke-width="7" stroke-linecap="round" stroke-linejoin="round" />
<path d="M426.8 0 L418 17 L417 42.5 L422.5 66.6 L434 92 L442 108" fill="none" stroke="#d4dce5" stroke-width="7" stroke-linecap="round" stroke-linejoin="round" />
<path d="M345 224 L352 211 L362 186.5 L376 160 L393 140.5 L417 124.5 L441 110.5" fill="none" stroke="#d4dce5" stroke-width="9.5" stroke-linecap="round" stroke-linejoin="round" />
<path d="M439.5 109 L442 102 L479 85 L507.6 73.7 L543 63.8 L580 57.5 L588 58" fill="none" stroke="#d4dce5" stroke-width="6.5" stroke-linecap="round" stroke-linejoin="round" />
<path d="M585 58 L666 56.9 L736 59.5" fill="none" stroke="#d4dce5" stroke-width="8" stroke-linecap="round" stroke-linejoin="round" />
<path d="M497.6 3 L520 0" fill="none" stroke="#d4dce5" stroke-width="6" stroke-linecap="round" stroke-linejoin="round" />
<path d="M426.8 0 L440 -4" fill="none" stroke="#d4dce5" stroke-width="6" stroke-linecap="round" stroke-linejoin="round" />
<path d="M443 106 L446.6 112 L476.4 164.4 L504 218" fill="none" stroke="#d3dae2" stroke-width="8.5" stroke-linecap="round" stroke-linejoin="round" />
<circle cx="497.6" cy="3" r="6" fill="#d4dce5"/>
<text x="338.8" y="9.2" font-size="15" text-anchor="end" textLength="116.2" lengthAdjust="spacingAndGlyphs" fill="#fff" stroke="#fff" stroke-width="3" stroke-linejoin="round" opacity=".9">London Transport</text><text x="338.8" y="9.2" font-size="15" text-anchor="end" textLength="116.2" lengthAdjust="spacingAndGlyphs" fill="#8a4be0">London Transport</text>
<text x="338.8" y="24.1" font-size="15" text-anchor="end" textLength="57.4" lengthAdjust="spacingAndGlyphs" fill="#fff" stroke="#fff" stroke-width="3" stroke-linejoin="round" opacity=".9">Museum</text><text x="338.8" y="24.1" font-size="15" text-anchor="end" textLength="57.4" lengthAdjust="spacingAndGlyphs" fill="#8a4be0">Museum</text>
<g transform="translate(355 9.9)"><path d="M0 16.500 C-2.500 12.500 -12.300 10 -12.300 0 A12.300 12.300 0 1 1 12.300 0 C12.300 10 2.500 12.500 0 16.500Z" fill="#fff" filter="url(#sh)"/><circle r="10.400" fill="#a55cf5"/><path d="M-5.500 -2.200 L0 -5.500 L5.500 -2.200 V-1 H-5.500Z M-4.300 0 h2 v3.800 h-2z M-1 0 h2 v3.800 h-2z M2.300 0 h2 v3.800 h-2z M-5.500 4.500 h11 v1.300 h-11z" fill="#fff"/></g>
<text x="120" y="34" font-size="10.5" text-anchor="middle" textLength="70" lengthAdjust="spacingAndGlyphs" fill="#fff" stroke="#fff" stroke-width="2.5" stroke-linejoin="round" opacity=".9">CHINATOWN</text><text x="120" y="34" font-size="10.5" text-anchor="middle" textLength="70" lengthAdjust="spacingAndGlyphs" fill="#64686e" stroke="#64686e" stroke-width="0.15">CHINATOWN</text>
<g transform="translate(36.5 31.3)"><path d="M0 16.500 C-2.500 12.500 -12.300 10 -12.300 0 A12.300 12.300 0 1 1 12.300 0 C12.300 10 2.500 12.500 0 16.500Z" fill="#fff" filter="url(#sh)"/><circle r="10.400" fill="#a55cf5"/><path d="M-1.300 -6 h2.600 v2.600 h3.800 l1.200 1.300 l-1.200 1.300 h-3.800 v6.800 h-2.600 v-6.800 h-3.800 v-2.600 h3.800z" fill="#fff"/></g>
<g transform="translate(179 -19) rotate(80)"><text x="0" y="0" font-size="13" text-anchor="start" fill="#fff" stroke="#fff" stroke-width="3" stroke-linejoin="round" opacity=".9">Cross Rd</text><text x="0" y="0" font-size="13" text-anchor="start" fill="#44546a" stroke="#44546a" stroke-width="0.35">Cross Rd</text></g>
<g transform="translate(3 52.5) rotate(-42)"><text x="0" y="0" font-size="13" text-anchor="start" fill="#fff" stroke="#fff" stroke-width="3" stroke-linejoin="round" opacity=".9">St</text><text x="0" y="0" font-size="13" text-anchor="start" fill="#44546a" stroke="#44546a" stroke-width="0.35">St</text></g>
<g transform="translate(194 42.5)"><circle r="6.300" fill="#fff" opacity=".8"/><circle r="4" fill="#fff" stroke="#dc241f" stroke-width="2.200"/><rect x="-6.200" y="-1.300" width="12.400" height="2.600" fill="#1c3f94"/></g>
<text x="202.8" y="47.5" font-size="13" text-anchor="start" textLength="101.7" lengthAdjust="spacingAndGlyphs" fill="#fff" stroke="#fff" stroke-width="3" stroke-linejoin="round" opacity=".9">Leicester Square</text><text x="202.8" y="47.5" font-size="13" text-anchor="start" textLength="101.7" lengthAdjust="spacingAndGlyphs" fill="#44546a" stroke="#44546a" stroke-width="0.35">Leicester Square</text>
<text x="338" y="49.6" font-size="15" text-anchor="start" textLength="109.3" lengthAdjust="spacingAndGlyphs" fill="#fff" stroke="#fff" stroke-width="3" stroke-linejoin="round" opacity=".9">Somerset House</text><text x="338" y="49.6" font-size="15" text-anchor="start" textLength="109.3" lengthAdjust="spacingAndGlyphs" fill="#8a4be0">Somerset House</text>
<g transform="translate(464 42.5)"><path d="M0 16.500 C-2.500 12.500 -12.300 10 -12.300 0 A12.300 12.300 0 1 1 12.300 0 C12.300 10 2.500 12.500 0 16.500Z" fill="#fff" filter="url(#sh)"/><circle r="10.400" fill="#a55cf5"/><path d="M0 -6 a6 6 0 1 0 0 12 c1.500 0 1.800 -1.200 1.200 -2 c-.8 -1.200 0 -2.200 1.300 -2.200 h1.500 a2.500 2.500 0 0 0 2 -2.500 c0 -3 -2.700 -5.300 -6 -5.300z" fill="#fff"/><circle cx="-3" cy="-0.500" r="1.100" fill="#a55cf5"/><circle cx="-1.200" cy="-3.300" r="1.100" fill="#a55cf5"/><circle cx="2" cy="-3.300" r="1.100" fill="#a55cf5"/><circle cx="-2" cy="3" r="1.100" fill="#a55cf5"/></g>
<text x="20.7" y="77" font-size="15" text-anchor="start" textLength="109.3" lengthAdjust="spacingAndGlyphs" fill="#fff" stroke="#fff" stroke-width="3" stroke-linejoin="round" opacity=".9">Leicester Square</text><text x="20.7" y="77" font-size="15" text-anchor="start" textLength="109.3" lengthAdjust="spacingAndGlyphs" fill="#8a4be0">Leicester Square</text>
<g transform="translate(146 69.8)"><path d="M0 16.500 C-2.500 12.500 -12.300 10 -12.300 0 A12.300 12.300 0 1 1 12.300 0 C12.300 10 2.500 12.500 0 16.500Z" fill="#fff" filter="url(#sh)"/><circle r="10.400" fill="#a55cf5"/><path d="M-6 -3 h3.500 l1 -1.500 h4 l1 1.500 h2.500 v8 h-12z" fill="#fff"/><circle cx="0.500" cy="1" r="2.200" fill="#a55cf5"/><path d="M-5 -6 v2.400 M-6.200 -4.800 h2.400" stroke="#fff" stroke-width="1"/></g>
<text x="-1.5" y="100" font-size="13" text-anchor="start" textLength="39" lengthAdjust="spacingAndGlyphs" fill="#fff" stroke="#fff" stroke-width="3" stroke-linejoin="round" opacity=".9">Circus</text><text x="-1.5" y="100" font-size="13" text-anchor="start" textLength="39" lengthAdjust="spacingAndGlyphs" fill="#44546a" stroke="#44546a" stroke-width="0.35">Circus</text>
<g transform="translate(45.2 95.4)"><circle r="6.300" fill="#fff" opacity=".8"/><circle r="4" fill="#fff" stroke="#dc241f" stroke-width="2.200"/><rect x="-6.200" y="-1.300" width="12.400" height="2.600" fill="#1c3f94"/></g>
<text x="297" y="85" font-size="15" text-anchor="start" textLength="67" lengthAdjust="spacingAndGlyphs" fill="#fff" stroke="#fff" stroke-width="3" stroke-linejoin="round" opacity=".9">The Savoy</text><text x="297" y="85" font-size="15" text-anchor="start" textLength="67" lengthAdjust="spacingAndGlyphs" fill="#e93ba3">The Savoy</text>
<g transform="translate(381.4 78.7)"><path d="M0 16.500 C-2.500 12.500 -12.300 10 -12.300 0 A12.300 12.300 0 1 1 12.300 0 C12.300 10 2.500 12.500 0 16.500Z" fill="#fff" filter="url(#sh)"/><circle r="10.400" fill="#f03cb0"/><path d="M-6.500 -4.500 h1.700 v5 h11.300 v4.500 h-1.700 v-1.800 h-9.600 v1.800 h-1.700z M-3.600 -1.800 a1.500 1.500 0 1 0 2.800 0 a1.500 1.500 0 1 0 -2.800 0z M0.300 -2.800 h4.200 a2 2 0 0 1 2 2 v.6 h-6.200z" fill="#fff"/></g>
<text x="42.5" y="133.3" font-size="15" text-anchor="start" textLength="130.5" lengthAdjust="spacingAndGlyphs" fill="#fff" stroke="#fff" stroke-width="3" stroke-linejoin="round" opacity=".9">The National Gallery</text><text x="42.5" y="133.3" font-size="15" text-anchor="start" textLength="130.5" lengthAdjust="spacingAndGlyphs" fill="#8a4be0">The National Gallery</text>
<g transform="translate(190 127)"><path d="M0 16.500 C-2.500 12.500 -12.300 10 -12.300 0 A12.300 12.300 0 1 1 12.300 0 C12.300 10 2.500 12.500 0 16.500Z" fill="#fff" filter="url(#sh)"/><circle r="10.400" fill="#a55cf5"/><path d="M-5.500 -2.200 L0 -5.500 L5.500 -2.200 V-1 H-5.500Z M-4.300 0 h2 v3.800 h-2z M-1 0 h2 v3.800 h-2z M2.300 0 h2 v3.800 h-2z M-5.500 4.500 h11 v1.300 h-11z" fill="#fff"/></g>
<g transform="translate(315 113) rotate(-37.5)"><text x="0" y="4.5" font-size="13" text-anchor="middle" textLength="42" lengthAdjust="spacingAndGlyphs" fill="#fff" stroke="#fff" stroke-width="3" stroke-linejoin="round" opacity=".9">Strand</text><text x="0" y="4.5" font-size="13" text-anchor="middle" textLength="42" lengthAdjust="spacingAndGlyphs" fill="#44546a" stroke="#44546a" stroke-width="0.35">Strand</text></g>
<g transform="translate(249.5 160.2)"><circle r="6.300" fill="#fff" opacity=".8"/><circle r="4" fill="#fff" stroke="#dc241f" stroke-width="2.200"/><rect x="-6.200" y="-1.300" width="12.400" height="2.600" fill="#1c3f94"/></g>
<text x="258.7" y="163.7" font-size="13" text-anchor="start" textLength="85.8" lengthAdjust="spacingAndGlyphs" fill="#fff" stroke="#fff" stroke-width="3" stroke-linejoin="round" opacity=".9">Charing Cross</text><text x="258.7" y="163.7" font-size="13" text-anchor="start" textLength="85.8" lengthAdjust="spacingAndGlyphs" fill="#44546a" stroke="#44546a" stroke-width="0.35">Charing Cross</text>
<g transform="translate(276.1 174)"><rect x="-6.700" y="-6.700" width="13.400" height="13.400" rx="2" fill="#fff"/><path d="M-5.500 -2.200 h11 M-5.500 2.200 h11 M-2.500 -4.800 l5 4.800 l-5 4.800" stroke="#e1251b" stroke-width="1.500" fill="none"/></g>
<text x="284.7" y="178.6" font-size="13" text-anchor="start" textLength="86" lengthAdjust="spacingAndGlyphs" fill="#fff" stroke="#fff" stroke-width="3" stroke-linejoin="round" opacity=".9">Charing Cross</text><text x="284.7" y="178.6" font-size="13" text-anchor="start" textLength="86" lengthAdjust="spacingAndGlyphs" fill="#44546a" stroke="#44546a" stroke-width="0.35">Charing Cross</text>
<text x="252" y="213.3" font-size="13" text-anchor="start" textLength="79.7" lengthAdjust="spacingAndGlyphs" fill="#fff" stroke="#fff" stroke-width="3" stroke-linejoin="round" opacity=".9">Embankment</text><text x="252" y="213.3" font-size="13" text-anchor="start" textLength="79.7" lengthAdjust="spacingAndGlyphs" fill="#44546a" stroke="#44546a" stroke-width="0.35">Embankment</text>
<g transform="translate(339.5 208.7)"><circle r="6.300" fill="#fff" opacity=".8"/><circle r="4" fill="#fff" stroke="#dc241f" stroke-width="2.200"/><rect x="-6.200" y="-1.300" width="12.400" height="2.600" fill="#1c3f94"/></g>
<g transform="translate(360.8 203.4)"><rect x="-6.400" y="-6.400" width="12.800" height="12.800" rx="2" fill="#fff"/><path d="M-4.800 .2 h9.600 l-1.800 2.300 h-6z M-3 -.4 l1 -1.600 h3.500 l1.500 1.600z M-1 -2.300 h1.500 v-.800 h-1.500z" fill="#111"/></g>
<g transform="translate(431.7 80.8) rotate(62)"><text x="-1" y="4.5" font-size="13" text-anchor="middle" textLength="30" lengthAdjust="spacingAndGlyphs" fill="#fff" stroke="#fff" stroke-width="3" stroke-linejoin="round" opacity=".9">A301</text><text x="-1" y="4.5" font-size="13" text-anchor="middle" textLength="30" lengthAdjust="spacingAndGlyphs" fill="#2a3442" stroke="#2a3442" stroke-width="0.3">A301</text></g>
<text x="481.3" y="64.5" font-size="13" text-anchor="start" textLength="44.7" lengthAdjust="spacingAndGlyphs" fill="#fff" stroke="#fff" stroke-width="3" stroke-linejoin="round" opacity=".9">Temple</text><text x="481.3" y="64.5" font-size="13" text-anchor="start" textLength="44.7" lengthAdjust="spacingAndGlyphs" fill="#44546a" stroke="#44546a" stroke-width="0.35">Temple</text>
<g transform="translate(533.8 60.7)"><circle r="6.300" fill="#fff" opacity=".8"/><circle r="4" fill="#fff" stroke="#dc241f" stroke-width="2.200"/><rect x="-6.200" y="-1.300" width="12.400" height="2.600" fill="#1c3f94"/></g>
<g transform="translate(566 63.5) rotate(-9)"><text x="0" y="4.5" font-size="13" text-anchor="middle" textLength="38" lengthAdjust="spacingAndGlyphs" fill="#fff" stroke="#fff" stroke-width="3" stroke-linejoin="round" opacity=".9">A3211</text><text x="0" y="4.5" font-size="13" text-anchor="middle" textLength="38" lengthAdjust="spacingAndGlyphs" fill="#2a3442" stroke="#2a3442" stroke-width="0.3">A3211</text></g>
<text x="690" y="29.3" font-size="12" text-anchor="start" textLength="41.8" lengthAdjust="spacingAndGlyphs" fill="#fff" stroke="#fff" stroke-width="2.5" stroke-linejoin="round" opacity=".9">Tallis St</text><text x="690" y="29.3" font-size="12" text-anchor="start" textLength="41.8" lengthAdjust="spacingAndGlyphs" fill="#2f456b" stroke="#2f456b" stroke-width="0.35">Tallis St</text>
<text x="595.4" y="151.7" font-size="15" text-anchor="start" textLength="70.6" lengthAdjust="spacingAndGlyphs" fill="#fff" stroke="#fff" stroke-width="3" stroke-linejoin="round" opacity=".9">Oxo Tower</text><text x="595.4" y="151.7" font-size="15" text-anchor="start" textLength="70.6" lengthAdjust="spacingAndGlyphs" fill="#8a4be0">Oxo Tower</text>
<g transform="translate(682.6 144.3)"><path d="M0 16.500 C-2.500 12.500 -12.300 10 -12.300 0 A12.300 12.300 0 1 1 12.300 0 C12.300 10 2.500 12.500 0 16.500Z" fill="#fff" filter="url(#sh)"/><circle r="10.400" fill="#a55cf5"/><path d="M-4 -6 h1.800 v1.600 h1.300 v-1.600 h1.800 v1.600 h1.300 v-1.600 h1.800 v3.800 l-1.200 1 v3.400 l1.800 1.600 v2 h-10.400 v-2 l1.800 -1.600 v-3.400 l-1.200 -1z" fill="#fff"/></g>
<text x="548.7" y="201.5" font-size="15" text-anchor="start" textLength="108.8" lengthAdjust="spacingAndGlyphs" fill="#fff" stroke="#fff" stroke-width="3" stroke-linejoin="round" opacity=".9">National Theatre</text><text x="548.7" y="201.5" font-size="15" text-anchor="start" textLength="108.8" lengthAdjust="spacingAndGlyphs" fill="#8a4be0">National Theatre</text>
<g transform="translate(532.4 195)"><path d="M0 16.500 C-2.500 12.500 -12.300 10 -12.300 0 A12.300 12.300 0 1 1 12.300 0 C12.300 10 2.500 12.500 0 16.500Z" fill="#fff" filter="url(#sh)"/><circle r="10.400" fill="#a55cf5"/><path d="M-7 -3 l1.200 -1.500 l1.800 1.200 h1 l1.800 -1.200 l1.200 1.500 v3.500 a3.500 3.500 0 0 1 -7 0z M0.500 -4.500 l1.100 -1.300 l1.600 1 h1 l1.600 -1 l1.100 1.300 v3.300 a3.200 3.200 0 0 1 -6.400 0z" fill="#fff"/></g>
<g transform="translate(456.5 168.7) rotate(-39)"><text x="0" y="0" font-size="14" text-anchor="end" textLength="82" lengthAdjust="spacingAndGlyphs" fill="#2893aa">River Thames</text></g>
<g transform="translate(473.5 169.5) rotate(61)"><text x="0" y="0" font-size="13" text-anchor="start" textLength="96" lengthAdjust="spacingAndGlyphs" fill="#fff" stroke="#fff" stroke-width="3" stroke-linejoin="round" opacity=".9">Waterloo Bridge</text><text x="0" y="0" font-size="13" text-anchor="start" textLength="96" lengthAdjust="spacingAndGlyphs" fill="#44546a" stroke="#44546a" stroke-width="0.35">Waterloo Bridge</text></g>
<g transform="translate(368.6 50.3)"><path d="M0 24.800 C-2 14 -13.500 10 -13.500 0 A13.500 13.500 0 1 1 13.500 0 C13.500 10 2 14 0 24.800Z" fill="#ea4335" stroke="#c5221f" stroke-width=".700"/><circle r="5.500" fill="#b31412"/></g>
<circle cx="704.300" cy="101.300" r="20.900" fill="#fff" filter="url(#sh)"/>
<path d="M700.500 94 l3.800 -3.800 l3.800 3.800 M700.500 108.600 l3.800 3.800 l3.800 -3.800 M697 97.500 l-3.800 3.800 l3.800 3.800 M711.600 97.500 l3.800 3.800 l-3.800 3.800" stroke="#666" stroke-width="2.500" fill="none"/>
<rect x="683" y="156.600" width="42.300" height="42.100" rx="2" fill="#fff" filter="url(#sh)"/>
<g transform="translate(703.900 167.300)"><path d="M-6 5.500 q6 -1.800 12 0 l2.500 10.500 l-2 .8 l-1.700 -5 l-.6 13.700 h-3.300 l-.9 -9 l-.9 9 h-3.300 l-.6 -13.700 l-1.700 5 l-2 -.8z" fill="#fab91e" stroke="#c88a12" stroke-width=".500"/><path d="M-3.800 5 l3.800 6.500 l3.800 -6.500z" fill="#e08a24"/><circle r="5.700" fill="#fab91e" stroke="#c88a12" stroke-width=".500"/></g>
<rect x="364.300" y="209.500" width="372" height="15" fill="#f5f5f5" opacity=".7"/>
<text x="368.6" y="220.400" font-size="10.300" fill="#222" textLength="90.8" lengthAdjust="spacingAndGlyphs">Keyboard shortcuts</text>
<text x="472.8" y="220.400" font-size="10.300" fill="#222" textLength="114.5" lengthAdjust="spacingAndGlyphs">Map data ©2025 Google</text>
<text x="601" y="220.400" font-size="10.300" fill="#222" textLength="27.5" lengthAdjust="spacingAndGlyphs">Terms</text>
<text x="641.8" y="220.400" font-size="10.300" fill="#222" textLength="87.6" lengthAdjust="spacingAndGlyphs">Report a map error</text>
<text x="11.500" y="214.500" font-size="19.500" fill="#fff" stroke="#fff" stroke-width="2.800" stroke-linejoin="round" textLength="57.500" lengthAdjust="spacingAndGlyphs">Google</text>
<text x="11.500" y="214.500" font-size="19.500" stroke-width=".600" textLength="57.500" lengthAdjust="spacingAndGlyphs"><tspan fill="#4285f4" stroke="#4285f4">G</tspan><tspan fill="#ea4335" stroke="#ea4335">o</tspan><tspan fill="#fbbc05" stroke="#fbbc05">o</tspan><tspan fill="#4285f4" stroke="#4285f4">g</tspan><tspan fill="#34a853" stroke="#34a853">l</tspan><tspan fill="#ea4335" stroke="#ea4335">e</tspan></text>
</g>
</svg>
<!--MAPEND-->

<div class="t h2" style="left:961.5px;top:302.7px">Trip Overview</div>
<div class="t" style="left:960.5px;top:355.3px;font-size:16.8px;font-weight:700;color:#000">What’s Included:</div>
<div class="t li" style="left:1002.3px;top:382px">5-star accommodations in central London</div>
<div class="t li" style="left:1002.3px;top:407px">Private tours of Tower of London</div>
<div class="t li" style="left:1002.3px;top:432px">West End theatre experience (VIP seating)</div>
<div class="t li" style="left:1002.3px;top:458px">Evening River Thames dinner cruise</div>
<div class="t li" style="left:1002.3px;top:483px">Awards Gala at a historic London venue</div>

<div class="bul" style="left:987.8px;top:389.7px;width:4.6px;height:4.6px;background:#212529"></div>
<div class="bul" style="left:987.8px;top:415px;width:4.6px;height:4.6px;background:#212529"></div>
<div class="bul" style="left:987.8px;top:440.3px;width:4.6px;height:4.6px;background:#212529"></div>
<div class="bul" style="left:987.8px;top:465.6px;width:4.6px;height:4.6px;background:#212529"></div>
<div class="bul" style="left:987.8px;top:490.9px;width:4.6px;height:4.6px;background:#212529"></div>
<svg class="abs" style="left:960px;top:648px" width="42" height="42" viewBox="0 0 42 42"><rect width="42" height="42" rx="5.500" fill="#ffa500"/><path d="M8.600 11.400 a2 2 0 0 1 2 -2 h8 l2.600 3.500 h10.800 a2 2 0 0 1 2 2 v14.800 a2 2 0 0 1 -2 2 h-21.400 a2 2 0 0 1 -2 -2z" fill="#fff"/></svg>
<svg class="abs" style="left:1667px;top:657px" width="27" height="26" viewBox="0 0 27 26"><g fill="none" stroke="#ffa500" stroke-width="2.200" stroke-linecap="round" stroke-linejoin="round"><path d="M13 1.500 v14.500 M6.500 10 l6.500 6.500 l6.500 -6.500"/></g><path d="M4.500 16.500 h4.500 l4 3.600 l4 -3.600 h4.500 a3.500 3.500 0 0 1 0 7.200 h-17 a3.500 3.500 0 0 1 0 -7.200z" fill="#ffa500"/><circle cx="21.700" cy="20.100" r="1.200" fill="#fff"/></svg>
<svg class="abs" style="left:960px;top:706px" width="42" height="42" viewBox="0 0 42 42"><rect width="42" height="42" rx="5.500" fill="#ffa500"/><path d="M8.600 11.400 a2 2 0 0 1 2 -2 h8 l2.600 3.500 h10.800 a2 2 0 0 1 2 2 v14.800 a2 2 0 0 1 -2 2 h-21.400 a2 2 0 0 1 -2 -2z" fill="#fff"/></svg>
<svg class="abs" style="left:1667px;top:715px" width="27" height="26" viewBox="0 0 27 26"><g fill="none" stroke="#ffa500" stroke-width="2.200" stroke-linecap="round" stroke-linejoin="round"><path d="M13 1.500 v14.500 M6.500 10 l6.500 6.500 l6.500 -6.500"/></g><path d="M4.500 16.500 h4.500 l4 3.600 l4 -3.600 h4.500 a3.500 3.500 0 0 1 0 7.200 h-17 a3.500 3.500 0 0 1 0 -7.200z" fill="#ffa500"/><circle cx="21.700" cy="20.100" r="1.200" fill="#fff"/></svg>
<div class="t h2" style="left:960px;top:599.5px;font-size:21.5px">Documents</div>
<div class="t" style="left:1018px;top:659.5px;font-size:14.2px;color:#212529">Hotel Confirmation Letter</div>
<div class="t" style="left:1018px;top:717.5px;font-size:14.2px;color:#212529">Flight E-ticket</div>

<div class="abs" style="left:0;top:787px;width:1733px;height:3px;background:#fff"></div>
<div id="topshade" class="abs"></div>
</body>
</html>
